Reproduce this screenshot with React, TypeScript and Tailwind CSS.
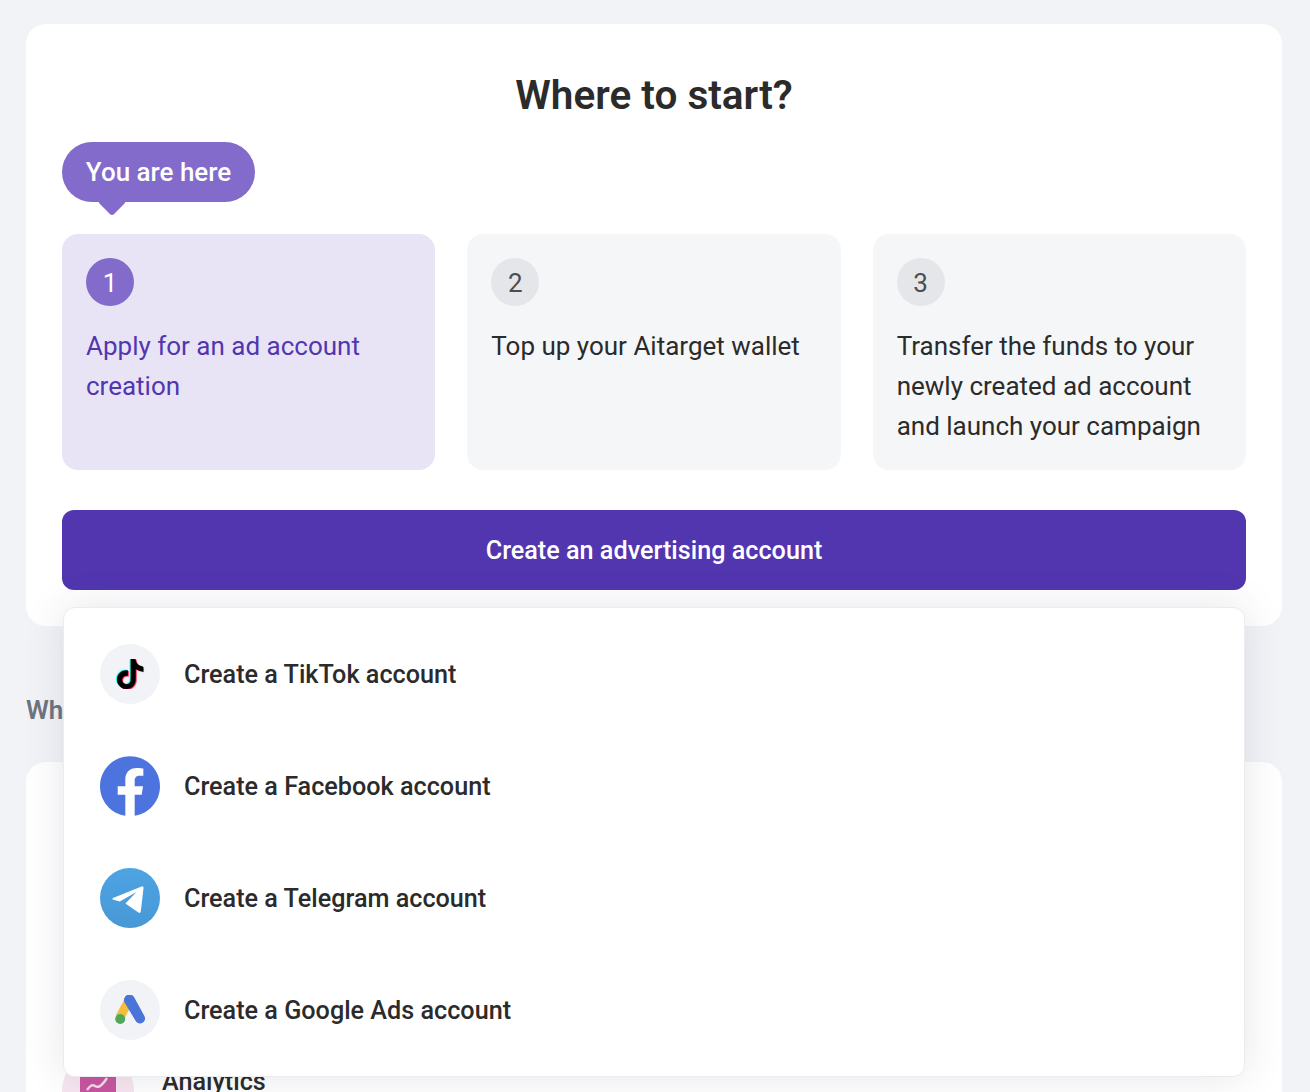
const steps = [
  { n: "1", text: "Apply for an ad account creation", active: true },
  { n: "2", text: "Top up your Aitarget wallet", active: false },
  { n: "3", text: "Transfer the funds to your newly created ad account and launch your campaign", active: false },
];

const tiktokPath =
  "M12.525.02c1.31-.02 2.61-.01 3.91-.02.08 1.53.63 3.09 1.75 4.17 1.12 1.11 2.7 1.62 4.24 1.79v4.03c-1.44-.05-2.89-.35-4.2-.97-.57-.26-1.1-.59-1.62-.93-.01 2.92.01 5.84-.02 8.75-.08 1.4-.54 2.79-1.35 3.94-1.31 1.92-3.58 3.17-5.91 3.21-1.43.08-2.86-.31-4.08-1.03-2.02-1.19-3.44-3.37-3.65-5.71-.02-.5-.03-1-.01-1.49.18-1.9 1.12-3.72 2.58-4.96 1.66-1.44 3.98-2.13 6.15-1.72.02 1.48-.04 2.96-.04 4.44-.99-.32-2.15-.23-3.02.37-.63.41-1.11 1.04-1.36 1.75-.21.51-.15 1.07-.14 1.61.24 1.64 1.82 3.02 3.5 2.87 1.12-.01 2.19-.66 2.77-1.61.19-.33.4-.67.41-1.06.1-1.79.06-3.57.07-5.36.01-4.03-.01-8.05.02-12.07z";

function TikTokIcon() {
  return (
    <div className="flex h-[60px] w-[60px] items-center justify-center rounded-full bg-[#f2f3f7]">
      <svg width="30" height="30" viewBox="0 0 24 24">
        <path d={tiktokPath} fill="#25f4ee" transform="translate(-0.8 -0.5)" />
        <path d={tiktokPath} fill="#fe2c55" transform="translate(0.8 0.6)" />
        <path d={tiktokPath} fill="#000" />
      </svg>
    </div>
  );
}

function FacebookIcon() {
  return (
    <svg width="60" height="60" viewBox="0 0 24 24">
      <circle cx="12" cy="12" r="11" fill="#fff" />
      <path
        fill="#4c73de"
        d="M24 12.073c0-6.627-5.373-12-12-12s-12 5.373-12 12c0 5.99 4.388 10.954 10.125 11.854v-8.385H7.078v-3.47h3.047V9.43c0-3.007 1.792-4.669 4.533-4.669 1.312 0 2.686.235 2.686.235v2.953H15.83c-1.491 0-1.956.925-1.956 1.874v2.25h3.328l-.532 3.47h-2.796v8.385C19.612 23.027 24 18.062 24 12.073z"
      />
    </svg>
  );
}

function TelegramIcon() {
  return (
    <svg width="60" height="60" viewBox="0 0 60 60">
      <defs>
        <linearGradient id="tg" x1="0" y1="0" x2="0" y2="1">
          <stop offset="0" stopColor="#4ea3e3" />
          <stop offset="1" stopColor="#4898d6" />
        </linearGradient>
      </defs>
      <circle cx="30" cy="30" r="30" fill="url(#tg)" />
      <path
        fill="#fff"
        d="M13 30 41.6 18.4c1.2-.4 2.2.3 1.9 1.9L40.8 43.6c-.2 1.4-1.3 1.7-2.4 1L25.4 35.4 36.5 24 19.8 33.6l-6.4-1.8c-1.2-.4-1.3-1.4-.4-1.8z"
      />
    </svg>
  );
}

function GoogleAdsIcon() {
  return (
    <div className="flex h-[60px] w-[60px] items-center justify-center rounded-full bg-[#f2f3f7]">
      <svg width="32" height="30" viewBox="0 0 32 30">
        <path d="M11 3 1.8 20.5l7.6 5L18 9z" fill="#f5bd3a" />
        <circle cx="6.2" cy="24" r="5" fill="#4fa85a" />
        <path d="M10.6 7.4a5.4 5.4 0 0 1 9.4-5.3L30.4 21a5 5 0 0 1-8.7 5z" fill="#4a74d8" />
      </svg>
    </div>
  );
}

const accounts = [
  { label: "Create a TikTok account", icon: <TikTokIcon /> },
  { label: "Create a Facebook account", icon: <FacebookIcon /> },
  { label: "Create a Telegram account", icon: <TelegramIcon /> },
  { label: "Create a Google Ads account", icon: <GoogleAdsIcon /> },
];

export default function App() {
  return (
    <div className="h-[1092px] w-[1310px] overflow-hidden bg-[#f2f3f7] pl-[26px] pr-7 pt-6 font-['Roboto',sans-serif] text-[#2b2b2b]">
      <section className="rounded-[20px] bg-white px-9 pb-9 pt-12">
        <h1 className="mb-6 text-center text-[40.5px] font-semibold leading-[46px]">Where to start?</h1>

        <div className="relative mb-8 flex h-[60px] w-[193px] items-center justify-center rounded-full bg-[#826bcb] text-[26px] font-medium text-white">
          You are here
          <span className="absolute left-[40px] top-[50px] h-5 w-5 rotate-45 rounded-[3px] bg-[#826bcb]" />
        </div>

        <div className="grid grid-cols-3 gap-8">
          {steps.map((s) => (
            <div key={s.n} className={s.active ? "h-[236px] rounded-2xl bg-[#e8e4f6] p-6" : "h-[236px] rounded-2xl bg-[#f4f6f8] p-6"}>
              <div
                className={
                  s.active
                    ? "flex h-12 w-12 items-center justify-center rounded-full bg-[#826bcb] pt-0.5 text-[26px] text-white"
                    : "flex h-12 w-12 items-center justify-center rounded-full bg-[#e4e6e9] pt-0.5 text-[26px] text-[#4a4d52]"
                }
              >
                {s.n}
              </div>
              <p className={s.active ? "mt-5 text-[26px] leading-10 text-[#5236b0]" : "mt-5 text-[26px] leading-10 text-[#2b2b2b]"}>
                {s.text}
              </p>
            </div>
          ))}
        </div>

        <div className="relative mt-10">
          <button className="flex h-20 w-full items-center justify-center rounded-xl bg-[#5236b0] pt-0.5 text-[25.2px] font-medium text-white">
            Create an advertising account
          </button>

          <div className="absolute left-px right-px top-[97px] z-10 rounded-xl border border-[#ececee] bg-white py-[10px] shadow-[0_0_40px_rgba(40,50,70,0.12)]">
            {accounts.map((a) => (
              <div key={a.label} className="flex h-28 items-center gap-6 px-9">
                {a.icon}
                <span className="pt-0.5 text-[25.2px] font-medium">{a.label}</span>
              </div>
            ))}
          </div>
        </div>
      </section>

      <h2 className="mb-8 mt-16 text-[26px] font-semibold leading-10 text-[#6e7480]">What else we offer</h2>

      <section className="rounded-[20px] bg-white px-9 pt-[292px]">
        <div className="flex items-start gap-7">
          <div className="flex h-[72px] w-[72px] shrink-0 items-center justify-center rounded-full bg-[#f7e6f0]">
            <div className="h-9 w-9 rounded-[3px] bg-[#c8559f]">
              <svg width="36" height="36" viewBox="0 0 36 36" fill="none" stroke="#f8d9ea" strokeWidth="2.5">
                <path d="M7 18c3-4 5-6 8-4s6 1 12-8" />
              </svg>
            </div>
          </div>
          <span className="mt-2 text-[25.2px] font-medium leading-10">Analytics</span>
        </div>
      </section>
    </div>
  );
}
